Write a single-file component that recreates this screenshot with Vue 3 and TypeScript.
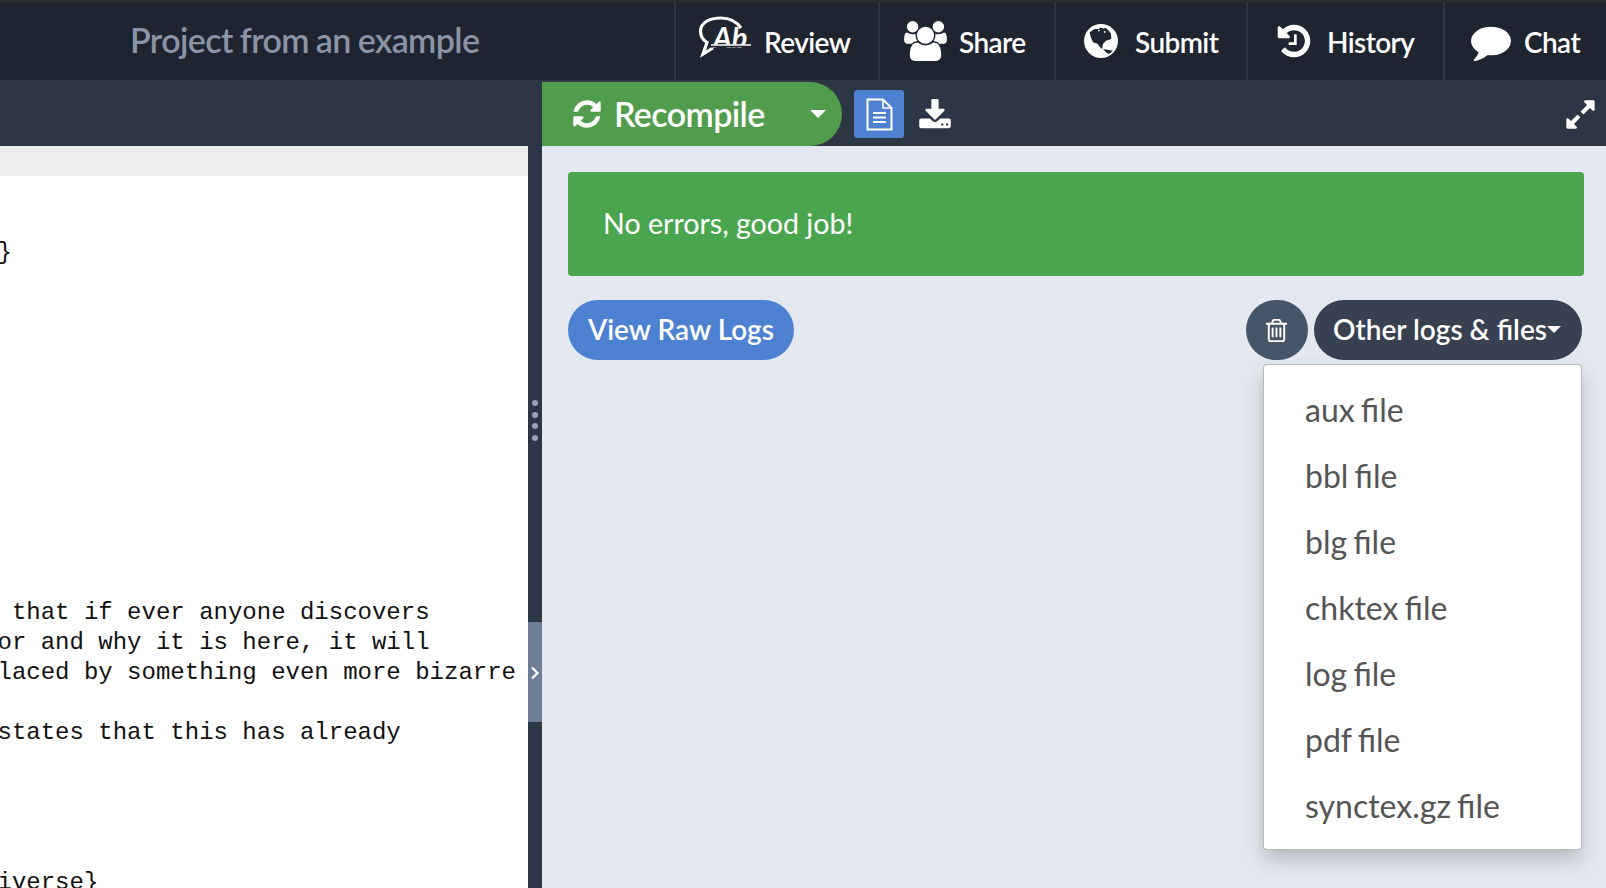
<script setup lang="ts">
const codeLines: string[] = [
  '', '', '}', '', '', '', '', '', '', '', '', '', '', '',
  ' that if ever anyone discovers',
  'or and why it is here, it will',
  'laced by something even more bizarre',
  '',
  'states that this has already',
  '', '', '', '',
  'iverse}'
]
const files: string[] = ['aux file', 'bbl file', 'blg file', 'chktex file', 'log file', 'pdf file', 'synctex.gz file']
</script>

<template>
  <div class="app">
    <header class="topbar">
      <div class="title-wrap"><span class="title">Project from an example</span></div>
      <nav class="nav">
        <a class="nav-item review">
          <svg class="ic-review" viewBox="0 0 54 44">
            <path d="M43 12C38 5 31 2 23 2 11 2 2.500 7 2.500 15c0 5 2.500 9 6.500 11.500L5 38l10-6" fill="none" stroke="#fff" stroke-width="3.200"/>
            <text x="15" y="32" class="ab">Ab</text>
            <path d="M13 30H53" stroke="#1e2530" stroke-width="3"/>
            <path d="M13 29H53" stroke="#fff" stroke-width="1.600"/>
          </svg>
          <span>Review</span>
        </a>
        <a class="nav-item share">
          <svg class="ic-share" viewBox="0 0 1920 1792"><path fill="#fff" d="M593 896q-162 5-265 128h-134q-82 0-138-40.500t-56-118.500q0-353 124-353 6 0 43.500 21t97.500 42.500 119 21.500q67 0 133-23-5 37-5 66 0 139 81 256zm1071 637q0 120-73 189.500t-194 69.500h-874q-121 0-194-69.500t-73-189.500q0-53 3.500-103.500t14-109 26.500-108.500 43-97.500 62-81 85.500-53.500 111.500-20q10 0 43 21.500t73 48 107 48 135 21.500 135-21.500 107-48 73-48 43-21.500q61 0 111.500 20t85.500 53.500 62 81 43 97.500 26.500 108.500 14 109 3.500 103.500zm-1024-1277q0 106-75 181t-181 75-181-75-75-181 75-181 181-75 181 75 75 181zm704 384q0 159-112.500 271.500t-271.500 112.500-271.500-112.500-112.500-271.500 112.500-271.500 271.500-112.500 271.500 112.500 112.500 271.500zm576 225q0 78-56 118.500t-138 40.500h-134q-103-123-265-128 81-117 81-256 0-29-5-66 66 23 133 23 59 0 119-21.500t97.500-42.500 43.500-21q124 0 124 353zm-128-609q0 106-75 181t-181 75-181-75-75-181 75-181 181-75 181 75 75 181z"/></svg>
          <span>Share</span>
        </a>
        <a class="nav-item submit">
          <svg class="ic-globe" viewBox="6 5 34 34">
            <circle cx="23" cy="22" r="17" fill="#fff"/>
            <path fill="#1e2530" d="M11.700 13.300L16.700 10l4.300 0 1-1.500 3 1 3-.5 3 3 2 3 .3 5-5.300 1.700L25 25l-1 5-3-3-1-2-5-1.700-2.300-5.300z"/>
            <path fill="#1e2530" d="M25 30l10 1.700-4 3.300-2.700-1.500z"/>
            <path fill="#fff" d="M20 11l1.500-.3.300 1.300-1.500.5zM26 12l2 .4-1 1.600-1.300-.7z"/>
          </svg>
          <span>Submit</span>
        </a>
        <a class="nav-item history">
          <svg class="ic-history" viewBox="0 0 1792 1792"><path fill="#fff" d="M1664 896q0 156-61 298t-164 245-245 164-298 61q-172 0-327-72.500t-264-204.500q-7-10-6.500-22.500t8.500-20.500l137-138q10-9 25-9 16 2 23 12 73 95 179 147t225 52q104 0 198.500-40.500t163.500-109.500 109.500-163.500 40.500-198.500-40.500-198.500-109.500-163.500-163.500-109.500-198.500-40.500q-98 0-188 35.500t-160 101.500l137 138q31 30 14 69-17 40-59 40h-448q-26 0-45-19t-19-45v-448q0-42 40-59 39-17 69 14l130 129q107-101 244.500-156.500t284.500-55.500q156 0 298 61t245 164 164 245 61 298zm-640-288v448q0 14-9 23t-23 9h-320q-14 0-23-9t-9-23v-64q0-14 9-23t23-9h224v-352q0-14 9-23t23-9h64q14 0 23 9t9 23z"/></svg>
          <span>History</span>
        </a>
        <a class="nav-item chat">
          <svg class="ic-chat" viewBox="0 0 1792 1792"><path fill="#fff" d="M1792 896q0 174-120 321.500t-326 233-450 85.500q-70 0-145-8-198 175-460 242-49 14-114 22-17 2-30.500-9t-17.500-29v-1q-3-4-.5-12t2-10 4.500-9.500l6-9 7-8.500 8-9q7-8 31-34.500t34.500-38 31-39.500 32.500-51 27-59 26-76q-157-89-247.500-220t-90.500-281q0-130 71-248.500t191-204.500 286-136.500 348-50.500q244 0 450 85.500t326 233 120 321.500z"/></svg>
          <span>Chat</span>
        </a>
      </nav>
    </header>

    <div class="toolbar">
      <div class="toolbar-left"></div>
      <div class="toolbar-right">
        <div class="recompile">
          <svg class="ic-refresh" viewBox="0 0 1792 1792"><path fill="#fff" d="M1639 1056q0 5-1 7-64 268-268 434.500t-478 166.500q-146 0-282.500-55t-243.500-157l-129 129q-19 19-45 19t-45-19-19-45v-448q0-26 19-45t45-19h448q26 0 45 19t19 45-19 45l-137 137q71 66 161 102t187 36q134 0 250-65t186-179q11-17 53-117 8-23 30-23h192q13 0 22.500 9.500t9.500 22.500zm25-800v448q0 26-19 45t-45 19h-448q-26 0-45-19t-19-45 19-45l138-138q-148-137-349-137-134 0-250 65t-186 179q-11 17-53 117-8 23-30 23h-199q-13 0-22.500-9.500t-9.500-22.500v-7q65-268 270-434.500t480-166.500q146 0 284 55.500t245 156.500l130-129q19-19 45-19t45 19 19 45z"/></svg>
          <span class="recompile-label">Recompile</span>
          <span class="caret-lg"></span>
        </div>
        <button class="doc-btn">
          <svg class="ic-doc" viewBox="0 0 27 33">
            <path d="M1.500 1.500H17L25.500 10V31.500H1.500Z" fill="none" stroke="#fff" stroke-width="2"/>
            <path d="M17 1.500V10H25.500" fill="none" stroke="#fff" stroke-width="1.600"/>
            <path d="M7 15H20M7 19.500H20M7 24H20" stroke="#fff" stroke-width="2"/>
          </svg>
        </button>
        <svg class="ic-download" viewBox="0 0 1792 1792"><path fill="#fff" d="M1344 1344q0-26-19-45t-45-19-45 19-19 45 19 45 45 19 45-19 19-45zm256 0q0-26-19-45t-45-19-45 19-19 45 19 45 45 19 45-19 19-45zm128-224v320q0 40-28 68t-68 28h-1472q-40 0-68-28t-28-68v-320q0-40 28-68t68-28h465l135 136q58 56 136 56t136-56l136-136h464q40 0 68 28t28 68zm-325-569q17 41-14 70l-448 448q-18 19-45 19t-45-19l-448-448q-31-29-14-70 17-39 59-39h256v-448q0-26 19-45t45-19h256q26 0 45 19t19 45v448h256q42 0 59 39z"/></svg>
        <svg class="ic-expand" viewBox="0 0 1792 1792"><path fill="#fff" d="M883 1056q0 13-10 23l-332 332 144 144q19 19 19 45t-19 45-45 19h-448q-26 0-45-19t-19-45v-448q0-26 19-45t45-19 45 19l144 144 332-332q10-10 23-10t23 10l114 114q10 10 10 23zm781-864v448q0 26-19 45t-45 19-45-19l-144-144-332 332q-10 10-23 10t-23-10l-114-114q-10-10-10-23t10-23l332-332-144-144q-19-19-19-45t19-45 45-19h448q26 0 45 19t19 45z"/></svg>
      </div>
    </div>

    <main class="main">
      <section class="editor">
        <div class="gutter-head"></div>
        <div class="code">
          <div v-for="(line, i) in codeLines" :key="i" class="code-line">{{ line }}</div>
        </div>
      </section>

      <div class="divider">
        <div class="dots"><i></i><i></i><i></i><i></i></div>
        <div class="toggle">
          <svg class="ic-chev" viewBox="0 0 10 14"><path d="M2 1.500L7.500 7 2 12.500" fill="none" stroke="#fff" stroke-width="2.400"/></svg>
        </div>
      </div>

      <section class="pdf">
        <div class="alert">No errors, good job!</div>
        <div class="actions">
          <button class="btn-raw">View Raw Logs</button>
          <div class="actions-right">
            <button class="btn-trash">
              <svg class="ic-trash" viewBox="0 0 1792 1792"><path fill="#fff" d="M704 736v576q0 14-9 23t-23 9h-64q-14 0-23-9t-9-23v-576q0-14 9-23t23-9h64q14 0 23 9t9 23zm256 0v576q0 14-9 23t-23 9h-64q-14 0-23-9t-9-23v-576q0-14 9-23t23-9h64q14 0 23 9t9 23zm256 0v576q0 14-9 23t-23 9h-64q-14 0-23-9t-9-23v-576q0-14 9-23t23-9h64q14 0 23 9t9 23zm128 724v-948h-896v948q0 22 7 40.500t14.500 27 10.500 8.500h832q3 0 10.500-8.500t14.500-27 7-40.500zm-672-1076h448l-48-117q-7-9-17-11h-317q-10 2-17 11zm928 32v64q0 14-9 23t-23 9h-96v948q0 83-47 143.500t-113 60.500h-832q-66 0-113-58.500t-47-141.500v-952h-96q-14 0-23-9t-9-23v-64q0-14 9-23t23-9h309l70-167q15-37 54-63t79-26h320q40 0 79 26t54 63l70 167h309q14 0 23 9t9 23z"/></svg>
            </button>
            <button class="btn-other">Other logs &amp; files<span class="caret-sm"></span></button>
            <ul class="menu">
              <li v-for="f in files" :key="f">{{ f }}</li>
            </ul>
          </div>
        </div>
      </section>
    </main>
  </div>
</template>

<style>
html, body { margin: 0; padding: 0; overflow: hidden; }
</style>

<style scoped>
.app {
  width: 100%;
  height: 100vh;
  display: flex;
  flex-direction: column;
  font-family: Lato, "Open Sans", sans-serif;
  overflow: hidden;
  background: #e4e8f1;
}
.topbar {
  height: 80px;
  box-sizing: border-box;
  border-top: 2px solid #2b2d30;
  background: #1e2530;
  display: flex;
  justify-content: space-between;
  flex: none;
}
.title-wrap { padding-left: 130px; display: flex; align-items: center; height: 76px; }
.title { font-size: 34px; font-weight: 600; color: #8a94a4; line-height: 1; letter-spacing: -0.6px; word-spacing: -1px; }
.nav { display: flex; }
.nav-item {
  display: flex;
  align-items: center;
  box-sizing: border-box;
  border-left: 2px solid #2c3645;
  color: #fff;
  font-size: 28px;
  font-weight: 600;
  letter-spacing: -0.6px;
  padding-top: 2px;
}
.review { width: 204px; padding-left: 22px; gap: 12px; }
.share { width: 176px; padding-left: 24px; gap: 12px; }
.submit { width: 192px; padding-left: 28px; gap: 17px; }
.history { width: 197px; padding-left: 27px; gap: 14px; }
.chat { width: 163px; padding-left: 26px; gap: 13px; }
.ic-review { width: 54px; height: 44px; flex: none; margin-top: -8px; overflow: visible; }
.ab { font-family: Lato, sans-serif; font-style: italic; font-weight: 700; font-size: 29px; letter-spacing: 0; fill: #fff; }
.ic-share { width: 43px; height: 40px; flex: none; margin-top: -2px; }
.ic-globe { width: 34px; height: 34px; flex: none; margin-top: -2px; }
.ic-history { width: 38px; height: 38px; flex: none; margin-top: -2px; }
.ic-chat { width: 40px; height: 40px; flex: none; margin-top: -2px; }

.toolbar {
  height: 66px;
  flex: none;
  background: #2c3645;
  display: flex;
}
.toolbar-left { width: 542px; flex: none; }
.toolbar-right { flex: 1; display: flex; align-items: flex-end; position: relative; }
.recompile {
  width: 300px;
  height: 64px;
  box-sizing: border-box;
  background: #529c4d;
  border-radius: 0 32px 32px 0;
  padding-left: 29px;
  display: flex;
  align-items: center;
  color: #fff;
}
.ic-refresh { width: 32px; height: 32px; flex: none; }
.recompile-label { font-size: 34px; font-weight: 600; margin-left: 11px; line-height: 1; letter-spacing: -0.6px; }
.caret-lg {
  margin-left: 45px;
  width: 0;
  height: 0;
  border-left: 8px solid transparent;
  border-right: 8px solid transparent;
  border-top: 8px solid #fff;
}
.doc-btn {
  margin: 0 0 8px 12px;
  width: 50px;
  height: 48px;
  padding: 0;
  border: 0;
  border-radius: 3px;
  background: #4e81d1;
  display: flex;
  align-items: center;
  justify-content: center;
}
.ic-doc { width: 27px; height: 33px; }
.ic-download { width: 34px; height: 34px; margin: 0 0 13px 14px; flex: none; }
.ic-expand { width: 33px; height: 33px; position: absolute; right: 9px; top: 18px; }

.main { flex: 1; display: flex; min-height: 0; }
.editor { width: 528px; flex: none; background: #fff; overflow: hidden; }
.gutter-head { height: 30px; background: #ededed; }
.code {
  font-family: "Liberation Mono", monospace;
  font-size: 24px;
  line-height: 30px;
  color: #111;
  white-space: pre;
  margin-left: -2.500px;
  padding-top: 2px;
}
.code-line { height: 30px; }
.divider {
  width: 14px;
  flex: none;
  background: #2c3645;
  position: relative;
}
.dots {
  display: flex;
  flex-direction: column;
  align-items: center;
  gap: 5.500px;
  padding-top: 254px;
}
.dots i { width: 6px; height: 6px; border-radius: 50%; background: #9aa3b2; }
.toggle {
  position: absolute;
  left: 0;
  top: 476px;
  width: 14px;
  height: 100px;
  background: #6f7d95;
  display: flex;
  align-items: center;
  justify-content: center;
}
.ic-chev { width: 10px; height: 14px; margin-top: 2px; }

.pdf { flex: 1; background: #e4e8f1; padding: 26px 22px 0 26px; min-width: 0; }
.alert {
  height: 104px;
  box-sizing: border-box;
  background: #4aa64e;
  border-radius: 4px;
  padding: 0 0 2px 35px;
  display: flex;
  align-items: center;
  color: #fff;
  font-size: 28.600px;
}
.actions { display: flex; justify-content: space-between; margin-top: 24px; }
.actions-right { display: flex; gap: 6px; position: relative; padding-right: 2px; }
button { font-family: inherit; cursor: pointer; }
.btn-raw {
  height: 60px;
  width: 226px;
  border: 0;
  border-radius: 30px;
  background: #4e81d1;
  color: #fff;
  font-size: 28px;
  font-weight: 600;
  padding: 0 0 2px;
}
.btn-trash {
  width: 62px;
  height: 60px;
  border: 0;
  border-radius: 30px;
  background: #475568;
  padding: 0 2px 0 0;
  display: flex;
  align-items: center;
  justify-content: center;
}
.ic-trash { width: 27px; height: 27px; }
.btn-other {
  height: 60px;
  width: 268px;
  border: 0;
  border-radius: 30px;
  background: #374151;
  color: #fff;
  font-size: 28px;
  font-weight: 600;
  padding: 0 0 2px 19px;
  display: flex;
  align-items: center;
}
.caret-sm {
  width: 0;
  height: 0;
  border-left: 7px solid transparent;
  border-right: 7px solid transparent;
  border-top: 7px solid #fff;
}
.menu {
  position: absolute;
  top: 64px;
  right: 2px;
  width: 319px;
  box-sizing: border-box;
  margin: 0;
  padding: 12px 0 10px;
  list-style: none;
  background: #fff;
  border: 1.500px solid rgba(0, 0, 0, 0.28);
  border-radius: 4px;
  box-shadow: 0 10px 20px rgba(0, 0, 0, 0.2);
  color: #555;
  font-size: 32px;
  word-spacing: -2px;
}
.menu li { height: 66px; line-height: 66px; padding-left: 41px; }
</style>
